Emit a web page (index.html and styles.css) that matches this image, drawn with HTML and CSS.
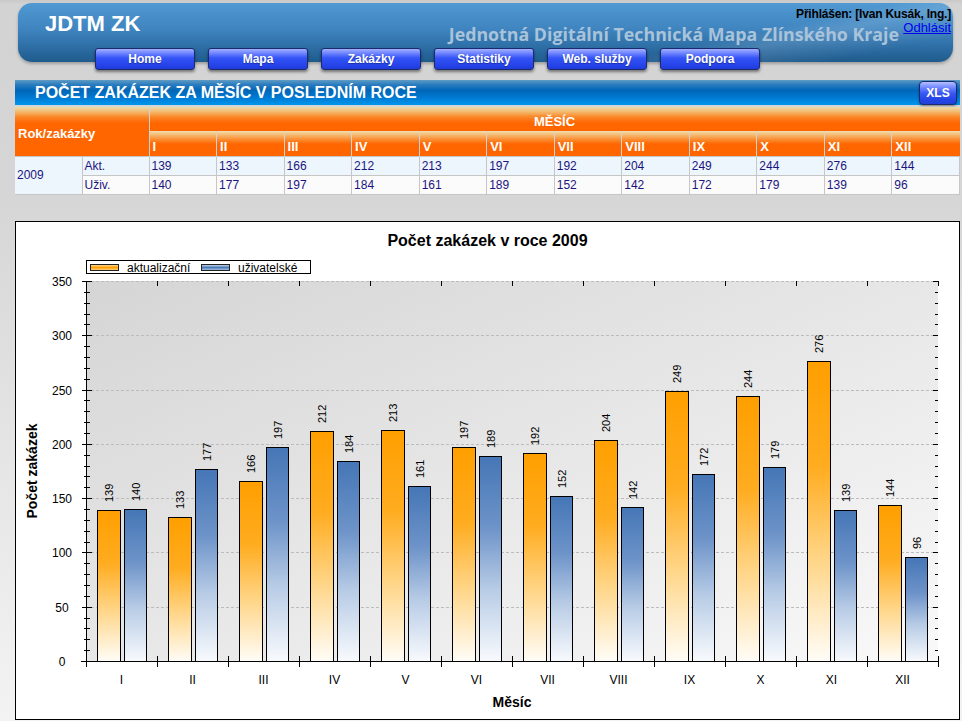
FILE: index.html
```html
<!DOCTYPE html>
<html lang="cs">
<head>
<meta charset="utf-8">
<title>JDTM ZK – Statistiky</title>
<link rel="stylesheet" href="styles.css">
</head>
<body>
<div class="page">
  <header class="masthead">
    <div class="mast-top">
      <div class="brand">JDTM ZK</div>
      <div class="subtitle">Jednotná Digitální Technická Mapa Zlínského Kraje</div>
    </div>
    <nav class="menu">
      <a class="menu-btn" href="#">Home</a>
      <a class="menu-btn" href="#">Mapa</a>
      <a class="menu-btn" href="#">Zakázky</a>
      <a class="menu-btn" href="#">Statistiky</a>
      <a class="menu-btn" href="#">Web. služby</a>
      <a class="menu-btn" href="#">Podpora</a>
    </nav>
    <div class="user">
      <div class="user-name">Přihlášen: [Ivan Kusák, Ing.]</div>
      <a class="logout" href="#">Odhlásit</a>
    </div>
  </header>

  <div class="section-bar">
    <h1 class="section-title">POČET ZAKÁZEK ZA MĚSÍC V POSLEDNÍM ROCE</h1>
    <a class="xls-btn" href="#">XLS</a>
  </div>

  <table class="stats">
    <colgroup>
      <col class="col-year"><col class="col-type">
      <col><col><col><col><col><col><col><col><col><col><col><col>
    </colgroup>
    <thead>
      <tr class="head-1">
        <th class="th-corner" colspan="2" rowspan="2">Rok/zakázky</th>
        <th class="th-group" colspan="12">MĚSÍC</th>
      </tr>
      <tr class="head-2">
        <th class="th-month">I</th><th class="th-month">II</th><th class="th-month">III</th>
        <th class="th-month">IV</th><th class="th-month">V</th><th class="th-month">VI</th>
        <th class="th-month">VII</th><th class="th-month">VIII</th><th class="th-month">IX</th>
        <th class="th-month">X</th><th class="th-month">XI</th><th class="th-month">XII</th>
      </tr>
    </thead>
    <tbody>
      <tr class="row-akt">
        <td class="td-year" rowspan="2">2009</td>
        <td>Akt.</td>
        <td>139</td><td>133</td><td>166</td><td>212</td><td>213</td><td>197</td>
        <td>192</td><td>204</td><td>249</td><td>244</td><td>276</td><td>144</td>
      </tr>
      <tr class="row-uziv">
        <td>Uživ.</td>
        <td>140</td><td>177</td><td>197</td><td>184</td><td>161</td><td>189</td>
        <td>152</td><td>142</td><td>172</td><td>179</td><td>139</td><td>96</td>
      </tr>
    </tbody>
  </table>

  <div class="chart">
    <svg class="chart-svg" width="943" height="497" viewBox="0 0 943 497">
      <defs>
        <linearGradient id="gO" x1="0" y1="0" x2="0" y2="1">
          <stop offset="0" stop-color="#ff9f00"/>
          <stop offset="0.35" stop-color="#ffac20"/>
          <stop offset="0.65" stop-color="#ffd484"/>
          <stop offset="1" stop-color="#fffdf8"/>
        </linearGradient>
        <linearGradient id="gB" x1="0" y1="0" x2="0" y2="1">
          <stop offset="0" stop-color="#4576b6"/>
          <stop offset="0.35" stop-color="#6e94c9"/>
          <stop offset="0.65" stop-color="#b8cce6"/>
          <stop offset="1" stop-color="#f8fafd"/>
        </linearGradient>
        <linearGradient id="gPlot" x1="0" y1="0" x2="1" y2="1">
          <stop offset="0" stop-color="#d5d5d5"/>
          <stop offset="1" stop-color="#f9f9f9"/>
        </linearGradient>
        <linearGradient id="lO" x1="0" y1="0" x2="0" y2="1">
          <stop offset="0" stop-color="#ffe4b0"/>
          <stop offset="0.5" stop-color="#ffa000"/>
          <stop offset="1" stop-color="#ffd890"/>
        </linearGradient>
        <linearGradient id="lB" x1="0" y1="0" x2="0" y2="1">
          <stop offset="0" stop-color="#d8e4f4"/>
          <stop offset="0.5" stop-color="#4a7ab8"/>
          <stop offset="1" stop-color="#b8cce6"/>
        </linearGradient>
      </defs>

      <text class="c-title" x="471.5" y="24" text-anchor="middle">Počet zakázek v roce 2009</text>

      <rect x="70.5" y="38.5" width="224" height="13" fill="#fff" stroke="#000"/>
      <rect x="74.5" y="42.5" width="28" height="6" fill="url(#lO)" stroke="#222"/>
      <text class="c-legend" x="111" y="50">aktualizační</text>
      <rect x="185.5" y="42.5" width="28" height="6" fill="url(#lB)" stroke="#222"/>
      <text class="c-legend" x="222" y="50">uživatelské</text>

      <rect x="70" y="59" width="852" height="380" fill="url(#gPlot)"/>
      <path class="grid" d="M70 385.5H922M70 330.5H922M70 276.5H922M70 222.5H922M70 168.5H922M70 113.5H922M70 59.5H922"/>

      <g fill="url(#gO)" stroke="#000">
        <rect x="81.5" y="288.5" width="23" height="151"/>
        <rect x="152.5" y="295.5" width="23" height="144"/>
        <rect x="223.5" y="259.5" width="23" height="180"/>
        <rect x="294.5" y="209.5" width="23" height="230"/>
        <rect x="365.5" y="208.5" width="23" height="231"/>
        <rect x="436.5" y="225.5" width="23" height="214"/>
        <rect x="507.5" y="231.5" width="23" height="208"/>
        <rect x="578.5" y="218.5" width="23" height="221"/>
        <rect x="649.5" y="169.5" width="23" height="270"/>
        <rect x="720.5" y="174.5" width="23" height="265"/>
        <rect x="791.5" y="139.5" width="23" height="300"/>
        <rect x="862.5" y="283.5" width="23" height="156"/>
      </g>
      <g fill="url(#gB)" stroke="#000">
        <rect x="108.5" y="287.5" width="22" height="152"/>
        <rect x="179.5" y="247.5" width="22" height="192"/>
        <rect x="250.5" y="225.5" width="22" height="214"/>
        <rect x="321.5" y="239.5" width="22" height="200"/>
        <rect x="392.5" y="264.5" width="22" height="175"/>
        <rect x="463.5" y="234.5" width="22" height="205"/>
        <rect x="534.5" y="274.5" width="22" height="165"/>
        <rect x="605.5" y="285.5" width="22" height="154"/>
        <rect x="676.5" y="252.5" width="22" height="187"/>
        <rect x="747.5" y="245.5" width="22" height="194"/>
        <rect x="818.5" y="288.5" width="22" height="151"/>
        <rect x="889.5" y="335.5" width="22" height="104"/>
      </g>

      <g class="c-value">
        <text transform="translate(97 280) rotate(-90)">139</text>
        <text transform="translate(168 287) rotate(-90)">133</text>
        <text transform="translate(239 251) rotate(-90)">166</text>
        <text transform="translate(310 201) rotate(-90)">212</text>
        <text transform="translate(381 200) rotate(-90)">213</text>
        <text transform="translate(452 217) rotate(-90)">197</text>
        <text transform="translate(523 223) rotate(-90)">192</text>
        <text transform="translate(594 210) rotate(-90)">204</text>
        <text transform="translate(665 161) rotate(-90)">249</text>
        <text transform="translate(736 166) rotate(-90)">244</text>
        <text transform="translate(807 131) rotate(-90)">276</text>
        <text transform="translate(878 275) rotate(-90)">144</text>
        <text transform="translate(123.5 279) rotate(-90)">140</text>
        <text transform="translate(194.5 239) rotate(-90)">177</text>
        <text transform="translate(265.5 217) rotate(-90)">197</text>
        <text transform="translate(336.5 231) rotate(-90)">184</text>
        <text transform="translate(407.5 256) rotate(-90)">161</text>
        <text transform="translate(478.5 226) rotate(-90)">189</text>
        <text transform="translate(549.5 266) rotate(-90)">152</text>
        <text transform="translate(620.5 277) rotate(-90)">142</text>
        <text transform="translate(691.5 244) rotate(-90)">172</text>
        <text transform="translate(762.5 237) rotate(-90)">179</text>
        <text transform="translate(833.5 280) rotate(-90)">139</text>
        <text transform="translate(904.5 327) rotate(-90)">96</text>
      </g>

      <g stroke="#000" fill="none">
        <path d="M70.5 59V445M65 439.5H923"/>
        <path d="M68 428.5h6M68 417.5h6M68 406.5h6M68 396.5h6M68 374.5h6M68 363.5h6M68 352.5h6M68 341.5h6M68 320.5h6M68 309.5h6M68 298.5h6M68 287.5h6M68 265.5h6M68 254.5h6M68 244.5h6M68 233.5h6M68 211.5h6M68 200.5h6M68 189.5h6M68 178.5h6M68 157.5h6M68 146.5h6M68 135.5h6M68 124.5h6M68 102.5h6M68 92.5h6M68 81.5h6M68 70.5h6"/>
        <path d="M66 385.5h10M66 330.5h10M66 276.5h10M66 222.5h10M66 168.5h10M66 113.5h10M66 59.5h10"/>
        <path d="M919 428.5h3M919 417.5h3M919 406.5h3M919 396.5h3M919 374.5h3M919 363.5h3M919 352.5h3M919 341.5h3M919 320.5h3M919 309.5h3M919 298.5h3M919 287.5h3M919 265.5h3M919 254.5h3M919 244.5h3M919 233.5h3M919 211.5h3M919 200.5h3M919 189.5h3M919 178.5h3M919 157.5h3M919 146.5h3M919 135.5h3M919 124.5h3M919 102.5h3M919 92.5h3M919 81.5h3M919 70.5h3"/>
        <path d="M917 385.5h5M917 330.5h5M917 276.5h5M917 222.5h5M917 168.5h5M917 113.5h5M917 59.5h6"/>
        <path d="M141.5 434V445M212.5 434V445M283.5 434V445M354.5 434V445M425.5 434V445M496.5 434V445M567.5 434V445M638.5 434V445M709.5 434V445M780.5 434V445M851.5 434V445M922.5 434V445"/>
        <path d="M141.5 59v5M212.5 59v5M283.5 59v5M354.5 59v5M425.5 59v5M496.5 59v5M567.5 59v5M638.5 59v5M709.5 59v5M780.5 59v5M851.5 59v5M922.5 59v5"/>
      </g>

      <g class="c-tick" text-anchor="middle">
        <text x="46" y="443.5">0</text>
        <text x="46" y="389.5">50</text>
        <text x="46" y="334.5">100</text>
        <text x="46" y="280.5">150</text>
        <text x="46" y="226.5">200</text>
        <text x="46" y="172.5">250</text>
        <text x="46" y="117.5">300</text>
        <text x="46" y="63.5">350</text>
      </g>
      <g class="c-tick" text-anchor="middle">
        <text x="105.5" y="462">I</text>
        <text x="176.5" y="462">II</text>
        <text x="247.5" y="462">III</text>
        <text x="318.5" y="462">IV</text>
        <text x="389.5" y="462">V</text>
        <text x="460.5" y="462">VI</text>
        <text x="531.5" y="462">VII</text>
        <text x="602.5" y="462">VIII</text>
        <text x="673.5" y="462">IX</text>
        <text x="744.5" y="462">X</text>
        <text x="815.5" y="462">XI</text>
        <text x="886.5" y="462">XII</text>
      </g>
      <text class="c-axis-title" x="496" y="485" text-anchor="middle">Měsíc</text>
      <text class="c-axis-title" transform="translate(21 249) rotate(-90)" text-anchor="middle">Počet zakázek</text>
    </svg>
  </div>
</div>
</body>
</html>
```

FILE: styles.css
```css
html {
  background: #efefef;
}

body {
  margin: 0;
  min-height: 721px;
  font-family: "Liberation Sans", Arial, sans-serif;
  background: linear-gradient(to bottom, #c9c9c9 0px, #d3d3d3 5px, #d6d6d6 200px, #e6e6e6 470px, #f3f3f3 721px);
}

.page {
  width: 945px;
  padding-left: 15px;
}

/* ---------- masthead ---------- */
.masthead {
  position: relative;
  height: 59px;
  margin: 3px 7px 0 3px;
  border-radius: 14px;
  display: flex;
  flex-direction: column;
  background:
    linear-gradient(168deg, rgba(255,255,255,0) 72%, rgba(255,255,255,0.13) 78%, rgba(255,255,255,0) 90%),
    linear-gradient(to bottom, #5099d2 0%, #3f84bf 45%, #2a6aa0 80%, #1f5b8c 100%);
  box-shadow: 0 2px 3px rgba(0,0,0,0.25);
}

.mast-top {
  flex: 0 0 45px;
  height: 45px;
  display: flex;
  align-items: flex-start;
}

.brand {
  padding: 8px 0 0 27px;
  font-size: 22px;
  line-height: 26px;
  font-weight: bold;
  color: #fff;
}

.subtitle {
  margin-left: auto;
  margin-right: 54px;
  padding-top: 19px;
  font-family: "Open Sans", "DejaVu Sans", sans-serif;
  font-weight: 700;
  font-size: 17.8px;
  line-height: 24px;
  color: #a9c3da;
  white-space: nowrap;
}

.user {
  position: absolute;
  top: 5px;
  right: 2px;
  text-align: right;
  font-size: 12px;
  line-height: 13px;
}

.user-name {
  font-weight: bold;
  color: #000;
  letter-spacing: -0.2px;
}

.logout {
  font-size: 13px;
  color: #0000ee;
  text-decoration: underline;
}

.menu {
  flex: 0 0 22px;
  display: flex;
  gap: 13px;
  margin-left: 77px;
  height: 22px;
}

.menu-btn {
  box-sizing: border-box;
  width: 100px;
  height: 22px;
  border: 1px solid #1b2a6c;
  border-radius: 3px;
  background: linear-gradient(to bottom, #a3b0ff 0%, #6d82ff 22%, #3454f6 45%, #2746ec 75%, #1f3bdc 100%);
  box-shadow: 0 2px 3px rgba(0,0,0,0.45);
  color: #fff;
  font-size: 12px;
  font-weight: bold;
  line-height: 20px;
  text-align: center;
  text-decoration: none;
  text-shadow: 0 1px 1px rgba(0,0,40,0.35);
}

/* ---------- section bar ---------- */
.section-bar {
  margin-top: 18px;
  height: 25px;
  display: flex;
  align-items: center;
  justify-content: space-between;
  background: linear-gradient(to bottom, #5f9cc4 0%, #2b7dbf 18%, #0066b8 42%, #0079d2 70%, #0096ec 100%);
}

.section-title {
  margin: 0;
  padding-left: 20px;
  font-size: 16px;
  line-height: 20px;
  font-weight: bold;
  color: #fff;
}

.xls-btn {
  box-sizing: border-box;
  width: 38px;
  height: 24px;
  margin-right: 3px;
  border: 1px solid #1b2a6c;
  border-radius: 4px;
  background: linear-gradient(to bottom, #b4c0ff 0%, #7186ff 25%, #3a58f4 50%, #2544e6 80%, #2240d8 100%);
  box-shadow: 0 1px 2px rgba(0,0,0,0.4);
  color: #fff;
  font-size: 12px;
  font-weight: bold;
  line-height: 22px;
  text-align: center;
  text-decoration: none;
}

/* ---------- table ---------- */
.stats {
  width: 945px;
  margin-top: 2px;
  border-collapse: collapse;
  table-layout: fixed;
  font-family: "Liberation Sans", Arial, sans-serif;
}

.col-year,
.col-type {
  width: 67px;
}

.stats th {
  color: #fff;
  font-weight: bold;
  font-size: 13px;
  text-align: left;
  padding: 0 3px;
  line-height: 15px;
}

.head-1 {
  height: 24px;
}

.head-2 {
  height: 25px;
}

.stats .th-corner {
  vertical-align: middle;
  padding-top: 5px;
  border-right: 1px solid #d2d2d2;
  background: linear-gradient(to bottom, #ecdcae 0px, #f3b86a 5px, #fa8628 10px, #ff6600 16px, #ff6600 100%);
}

.stats .th-group {
  text-align: center;
  vertical-align: bottom;
  padding-bottom: 2px;
  background: linear-gradient(to bottom, #ecdcae 0px, #f3b86a 5px, #fa8628 10px, #ff6600 16px, #ff6600 100%);
}

.stats .th-month {
  vertical-align: bottom;
  padding-bottom: 2px;
  border-left: 1px solid #d2d2d2;
  background: linear-gradient(to bottom, #f1ddb2 0px, #f4c27e 3px, #f99138 8px, #ff6600 13px, #ff6600 100%);
}

.stats td {
  height: 18px;
  padding: 0 2px;
  border: 1px solid #c6c6c6;
  font-size: 12px;
  line-height: 14px;
  color: #1b1480;
}

.row-akt td {
  background: #eef6fd;
}

.row-uziv td {
  background: #fbfbfb;
}

.stats .td-year {
  background: #eef6fd;
  border-left: none;
}

/* ---------- chart ---------- */
.chart {
  box-sizing: border-box;
  width: 945px;
  height: 499px;
  margin-top: 26px;
  border: 1px solid #000;
  background: #fff;
}

.chart-svg {
  display: block;
}

.chart-svg text {
  font-family: "Liberation Sans", Arial, sans-serif;
  fill: #000;
}

.c-title {
  font-size: 16px;
  font-weight: bold;
}

.c-legend {
  font-size: 12px;
}

.c-value text {
  font-size: 11px;
}

.c-tick text {
  font-size: 12px;
}

.c-axis-title {
  font-size: 14px;
  font-weight: bold;
}

.grid {
  fill: none;
  stroke: #bcbcbc;
  stroke-dasharray: 3 2;
}
```
